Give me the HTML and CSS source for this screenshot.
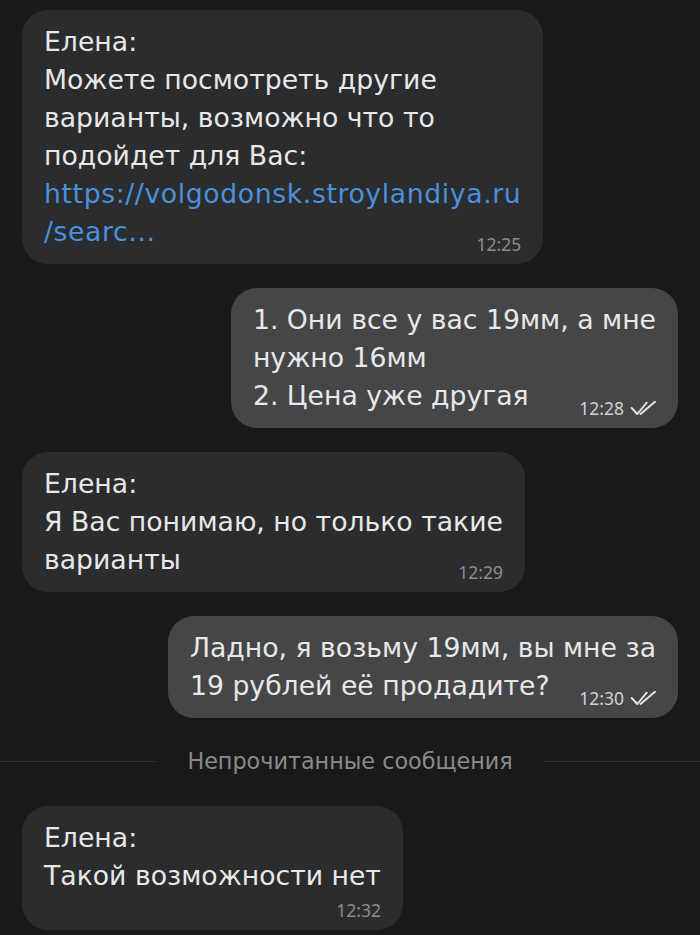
FILE: index.html
```html
<!DOCTYPE html>
<html lang="ru">
<head>
<meta charset="utf-8">
<link rel="stylesheet" href="styles.css">
</head>
<body>
<div class="chat">
  <div class="bubble in">
    <div class="text">Елена:<br>Можете посмотреть другие<br>варианты, возможно что то<br>подойдет для Вас:<br><span class="link">https://volgodonsk.stroylandiya.ru<br>/searc...</span><span class="meta">12:25</span></div>
  </div>
  <div class="bubble out">
    <div class="text">1. Они все у вас 19мм, а мне<br>нужно 16мм<br>2. Цена уже другая<span class="meta">12:28<svg class="ticks" viewBox="0 0 26 16" width="26" height="16"><path d="M1.7 8 L7.3 14 L16.7 2.7 M10.5 14 L25 1.8" fill="none" stroke="currentColor" stroke-width="1.9" stroke-linecap="round" stroke-linejoin="round"/></svg></span></div>
  </div>
  <div class="bubble in">
    <div class="text">Елена:<br>Я Вас понимаю, но только такие<br>варианты<span class="meta">12:29</span></div>
  </div>
  <div class="bubble out">
    <div class="text">Ладно, я возьму 19мм, вы мне за<br>19 рублей её продадите?<span class="meta">12:30<svg class="ticks" viewBox="0 0 26 16" width="26" height="16"><path d="M1.7 8 L7.3 14 L16.7 2.7 M10.5 14 L25 1.8" fill="none" stroke="currentColor" stroke-width="1.9" stroke-linecap="round" stroke-linejoin="round"/></svg></span></div>
  </div>
  <div class="divider"><span class="divider-text">Непрочитанные сообщения</span></div>
  <div class="bubble in">
    <div class="text">Елена:<br>Такой возможности нет</div>
    <div class="meta-row"><span class="meta-inline">12:32</span></div>
  </div>
</div>
</body>
</html>
```
FILE: styles.css
```css
html, body {
  margin: 0;
  padding: 0;
  background: #19191a;
}
body {
  width: 700px;
  height: 935px;
  overflow: hidden;
  font-family: "DejaVu Sans", "Noto Sans", sans-serif;
  color: #e8e8e8;
}
.chat {
  display: flex;
  flex-direction: column;
  gap: 24px;
  padding: 10px 22px 0;
}
.bubble {
  display: flow-root;
  max-width: 560px;
  padding: 13px 22px 11px;
  border-radius: 26px;
  font-size: 26.7px;
  line-height: 38px;
  white-space: nowrap;
}
.bubble.in {
  align-self: flex-start;
  background: #2b2c2e;
}
.bubble.out {
  align-self: flex-end;
  background: #454648;
}
.link {
  color: #4a90dc;
  letter-spacing: 0.6px;
}
.meta {
  float: right;
  margin-top: 22px;
  margin-left: 16px;
  font-family: "Noto Sans", sans-serif;
  font-size: 17.5px;
  line-height: 18px;
  letter-spacing: 0;
  color: #8c8d8f;
  display: flex;
  align-items: center;
  gap: 6px;
}
.out .meta {
  color: #d2d2d2;
}
.ticks {
  color: #e6e6e6;
  display: block;
}
.meta-row {
  display: flex;
  justify-content: flex-end;
  margin-top: 6px;
}
.meta-inline {
  font-family: "Noto Sans", sans-serif;
  font-size: 17.5px;
  line-height: 18px;
  color: #8c8d8f;
}
.divider {
  display: flex;
  align-items: center;
  gap: 30px;
  margin: 0 -22px 2px;
  height: 38px;
  font-size: 22.3px;
  color: #8a8a8a;
}
.divider::before,
.divider::after {
  content: "";
  flex: 1;
  height: 1px;
  background: #2d2d2e;
}
```
